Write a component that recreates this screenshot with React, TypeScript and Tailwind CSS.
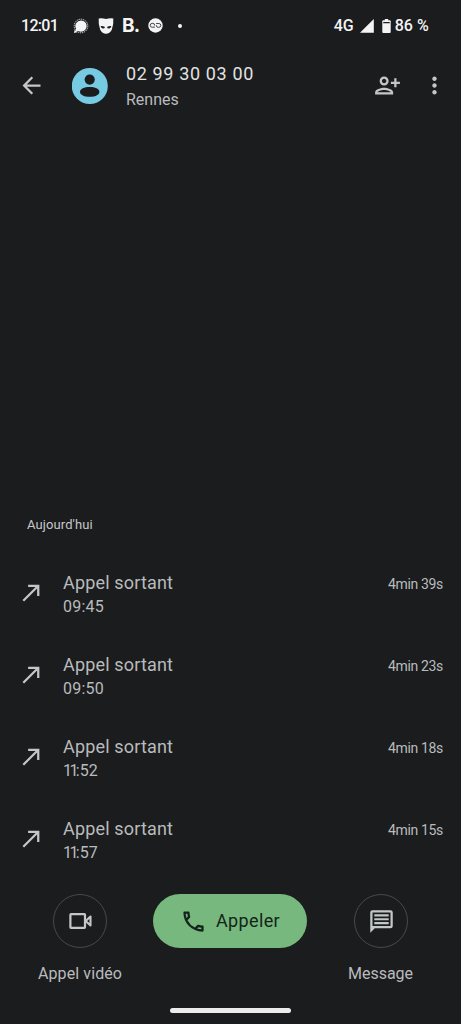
import { type FC } from 'react';
import clsx from 'clsx';
import { MdArrowBack, MdCallMade, MdMoreVert, MdOutlineCall } from 'react-icons/md';

type Call = { time: string; duration: string };

const calls: Call[] = [
  { time: '09:45', duration: '4min 39s' },
  { time: '09:50', duration: '4min 23s' },
  { time: '11:52', duration: '4min 18s' },
  { time: '11:57', duration: '4min 15s' },
];

const StatusBar: FC = () => (
  <div className="flex h-[51px] items-center pl-[21px] pr-8 font-medium text-[#f4f4f4]">
    <span className="w-[52px] text-[16px] tracking-[-0.7px]">12:01</span>
    {/* Signal */}
    <svg className="h-4 w-4" viewBox="0 0 16 16" fill="currentColor">
      <path d="M8 2.4a5.6 5.6 0 1 1-2.7 10.5L2.4 13.7l.7-2.9A5.6 5.6 0 0 1 8 2.4z" />
      <circle cx="8" cy="8" r="6.8" fill="none" stroke="currentColor" strokeWidth="0.9" strokeDasharray="1.3 0.8" />
      <path d="M1 15l.7-3.2L4.2 14.3z" />
    </svg>
    {/* Mask */}
    <svg className="ml-[9px] h-4 w-4" viewBox="0 0 16 16">
      <path d="M.7.5Q4.3.1 8 .9 11.7.1 15.3.5 15.8 6.9 13.8 11.7 11.7 15.8 8 15.8 4.3 15.8 2.2 11.7.2 6.9.7.5z" fill="currentColor" />
      <path d="M2.6 8.1Q5.1 7.9 7 9 6.6 10.6 4.8 10.5 3 10.3 2.6 8.1zM13.4 8.1Q10.9 7.9 9 9q.4 1.6 2.2 1.5 1.8-.2 2.2-2.4z" fill="#1b1c1e" />
    </svg>
    <span className="ml-2 w-[16px] font-['Inter',sans-serif] text-[19px] font-bold leading-none tracking-[-0.8px]">B.</span>
    <svg className="ml-[10px] h-[15px] w-[15px]" viewBox="0 0 15 15">
      <circle cx="7.5" cy="7.5" r="7.2" fill="currentColor" />
      <g fill="none" stroke="#1b1c1e" strokeWidth="0.8">
        <path d="M6.9 9.2H4.1a1.9 1.9 0 0 1 0-3.8h.8a1.7 1.7 0 0 1 1.7 1.7v.5" />
        <path d="M8.1 5.5h2.8a1.9 1.9 0 0 1 0 3.8h-.8a1.7 1.7 0 0 1-1.7-1.7v-.5" />
      </g>
    </svg>
    <span className="ml-[15px] h-1 w-1 rounded-full bg-current" />
    <div className="ml-auto flex items-center">
      <span className="w-[26px] text-[16px]">4G</span>
      <svg className="h-[14px] w-[14px]" viewBox="0 0 14 14" fill="currentColor">
        <path d="M13.8 0v13.8H0z" />
      </svg>
      <svg className="ml-2 h-[14px] w-[9px]" viewBox="0 0 9 14" fill="currentColor">
        <path d="M2.8 0h3.4v1.3h1.5q1 0 1 1V3H.3v-.7q0-1 1-1h1.5zM.3 4.2h8.4V13q0 1-1 1H1.3q-1 0-1-1z" />
        <path d="M.3 2.5h1v2h-1zM7.7 2.5h1v2h-1z" />
      </svg>
      <span className="ml-1 text-[16px] tracking-[0.1px]">86 %</span>
    </div>
  </div>
);

const Header: FC = () => (
  <header className="flex h-[70px] items-center pl-[18px] text-[#c4c7c8]">
    <MdArrowBack className="mb-px h-[27px] w-[27px]" />
    <svg className="ml-[27px] h-9 w-9" viewBox="0 0 36 36">
      <circle cx="17.8" cy="18" r="18" fill="#76cbe3" />
      <circle cx="17.7" cy="11.6" r="5.1" fill="#1b1c1e" />
      <path d="M8 23.9c0-3 4.4-4.9 9.7-4.9s9.7 1.9 9.7 4.9-4.4 4.9-9.7 4.9S8 26.9 8 23.9z" fill="#1b1c1e" />
    </svg>
    <div className="ml-[18px] flex-1 whitespace-nowrap pt-[2px]">
      <div className="text-[18px] leading-[25px] tracking-[0.64px] text-[#e2e3e3]">02 99 30 03 00</div>
      <div className="text-[16px] leading-[27px] text-[#b9bbbc]">Rennes</div>
    </div>
    <svg className="mb-px h-[27px] w-[27px]" viewBox="0 0 24 24" fill="currentColor">
      <path d="M13 8c0-2.21-1.79-4-4-4S5 5.79 5 8s1.79 4 4 4 4-1.79 4-4zm-2 0c0 1.1-.9 2-2 2s-2-.9-2-2 .9-2 2-2 2 .9 2 2zM1 18v2h16v-2c0-2.66-5.33-4-8-4s-8 1.34-8 4zm2 0c.2-.71 3.3-2 6-2 2.69 0 5.78 1.28 6 2H3z" />
      <path d="M20 13.6v-3h3v-2h-3v-3h-2v3h-3v2h3v3z" />
    </svg>
    <MdMoreVert className="mb-px ml-5 mr-[13px] h-[27px] w-[27px]" />
  </header>
);

const CallRow: FC<{ call: Call }> = ({ call }) => {
  const [hours, minutes] = call.time.split(':');

  return (
    <li className="flex h-[82px] items-center pl-[18px] pr-[18px] text-[#b9bbbc]">
      <MdCallMade className="h-[27px] w-[27px] text-[#c4c7c8]" />
      <div className="ml-[18px] flex-1 pt-[5px]">
        <div className="text-[18px] leading-[24px] tracking-[0.17px]">Appel sortant</div>
        <div className="text-[16px] leading-[24px]">
          <span className={clsx(hours === '11' ? 'tracking-[-2.6px]' : 'tracking-[0.3px]')}>{hours}</span>
          <span className="tracking-[0.1px]">:{minutes}</span>
        </div>
      </div>
      <span className="mb-[16px] text-[14px] leading-5 tracking-[-0.35px]">{call.duration}</span>
    </li>
  );
};

const Actions: FC = () => (
  <div className="flex h-[145px] items-start pt-[15px] text-[#b9bbbc]">
    <div className="ml-[30px] flex w-[100px] flex-col items-center">
      <button className="flex h-[54px] w-[54px] items-center justify-center rounded-full border border-[#47494a]">
        <svg className="h-[27px] w-[27px] text-[#c4c7c8]" viewBox="0 0 27 27" fill="none" stroke="currentColor" strokeWidth="2.2" strokeLinejoin="round">
          <rect x="3.4" y="6.1" width="14.6" height="13.8" rx="0.6" />
          <path d="M18.7 13l4.8-4.5v9z" strokeWidth="2.1" />
        </svg>
      </button>
      <span className="mt-4 text-[16px] leading-5 tracking-[0.1px]">Appel vidéo</span>
    </div>
    <button className="ml-[23px] flex h-[54px] w-[154px] items-center rounded-full bg-[#76b87d] pl-[27px] text-[#142419]">
      <MdOutlineCall className="h-[27px] w-[27px]" />
      <span className="-mt-0.5 ml-[9px] text-[18px] tracking-[0.35px]">Appeler</span>
    </button>
    <div className="ml-[24px] flex w-[100px] flex-col items-center">
      <button className="flex h-[54px] w-[54px] items-center justify-center rounded-full border border-[#47494a]">
        <svg className="h-[27px] w-[27px] text-[#c4c7c8]" viewBox="0 0 24 24" fill="currentColor">
          <path d="M4 2h16a2 2 0 0 1 2 2v12a2 2 0 0 1-2 2H6l-4 4V4a2 2 0 0 1 2-2zm0 2v12h16V4z" fillRule="evenodd" />
          <path d="M5.6 5.6h12.8v1.9H5.6zM5.6 9.05h12.8v1.9H5.6zM5.6 12.5h12.8v1.9H5.6z" />
        </svg>
      </button>
      <span className="mr-px mt-4 text-[16px] leading-5">Message</span>
    </div>
  </div>
);

export default function App() {
  return (
    <div className="relative flex h-[1024px] w-[461px] flex-col overflow-hidden bg-[#1b1c1e] font-['Roboto',sans-serif]">
      <StatusBar />
      <Header />
      <main className="flex flex-1 flex-col justify-end">
        <h2 className="mb-4 ml-[27px] text-[13px] leading-5 tracking-[0.1px] text-[#c6c8c9]">Aujourd'hui</h2>
        <ul>
          {calls.map((call) => (
            <CallRow key={call.time} call={call} />
          ))}
        </ul>
      </main>
      <Actions />
      <div className="absolute bottom-[11px] left-[170px] h-[5px] w-[121px] rounded-full bg-[#ececec]" />
    </div>
  );
}
